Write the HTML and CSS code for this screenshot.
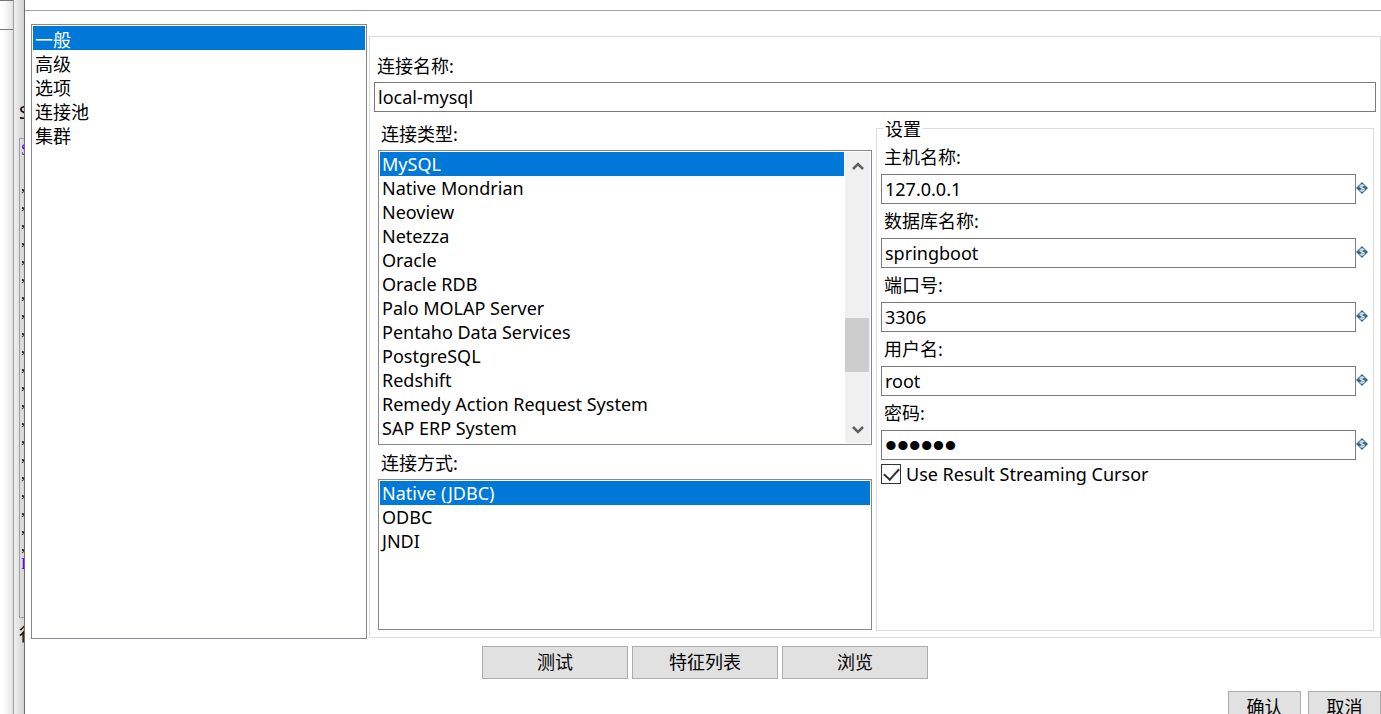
FILE: index.html
```html
<!DOCTYPE html>
<html lang="zh-CN">
<head>
<meta charset="utf-8">
<title>数据库连接</title>
<link rel="stylesheet" href="styles.css">
</head>
<body>
<svg class="defs" aria-hidden="true">
  <symbol id="variable" viewBox="0 0 12 12">
    <path d="M6 0 12 6 6 12 0 6Z" fill="#3e6a8a"/>
    <path d="M8.200 4C7.500 2.700 4 2.700 4 4.500C4 6.200 8.200 5.700 8.200 7.500C8.200 9.300 4.600 9.200 3.800 8M6 2V10" fill="none" stroke="#d3e0ea" stroke-width="1.300"/>
  </symbol>
</svg>
<div class="desktop">
  <div class="app-window"><div class="app-toolbar"></div></div>
  <div class="step-window">
    <div class="step-label">S</div>
    <pre class="sql"><b>S</b>

,
,
,
,
,
,
,
,
,
,
,
,
,
,
,
,
,
,
,
,
,
<b>F</b></pre>
    <div class="step-status">行</div>
  </div>
  <main class="dialog">
    <div class="dialog-top"></div>
    <div class="workspace">
      <select class="listbox nav" size="5" aria-label="分类">
        <option selected>一般</option>
        <option>高级</option>
        <option>选项</option>
        <option>连接池</option>
        <option>集群</option>
      </select>
      <section class="panel">
        <label class="label name-label" for="name">连接名称:</label>
        <input class="text-input" id="name" type="text" value="local-mysql">
        <div class="columns">
          <div class="types">
            <label class="label" for="type">连接类型:</label>
            <div class="scroll-list">
              <select class="listbox" id="type" size="12">
                <option selected>MySQL</option>
                <option>Native Mondrian</option>
                <option>Neoview</option>
                <option>Netezza</option>
                <option>Oracle</option>
                <option>Oracle RDB</option>
                <option>Palo MOLAP Server</option>
                <option>Pentaho Data Services</option>
                <option>PostgreSQL</option>
                <option>Redshift</option>
                <option>Remedy Action Request System</option>
                <option>SAP ERP System</option>
              </select>
              <div class="scrollbar" aria-hidden="true">
                <svg class="arrow" viewBox="0 0 12 10"><path d="M1 8 6 3 11 8" /></svg>
                <div class="track"><div class="thumb"></div></div>
                <svg class="arrow" viewBox="0 0 12 10"><path d="M1 2 6 7 11 2" /></svg>
              </div>
            </div>
            <label class="label" for="access">连接方式:</label>
            <select class="listbox access" id="access" size="3">
              <option selected>Native (JDBC)</option>
              <option>ODBC</option>
              <option>JNDI</option>
            </select>
          </div>
          <fieldset class="settings">
            <legend>设置</legend>
            <label class="field-label" for="host">主机名称:</label>
            <div class="field"><input class="text-input" id="host" type="text" value="127.0.0.1"><svg class="variable"><use href="#variable"/></svg></div>
            <label class="field-label" for="db">数据库名称:</label>
            <div class="field"><input class="text-input" id="db" type="text" value="springboot"><svg class="variable"><use href="#variable"/></svg></div>
            <label class="field-label" for="port">端口号:</label>
            <div class="field"><input class="text-input" id="port" type="text" value="3306"><svg class="variable"><use href="#variable"/></svg></div>
            <label class="field-label" for="user">用户名:</label>
            <div class="field"><input class="text-input" id="user" type="text" value="root"><svg class="variable"><use href="#variable"/></svg></div>
            <label class="field-label" for="password">密码:</label>
            <div class="field"><input class="text-input password" id="password" type="password" value="secret"><svg class="variable"><use href="#variable"/></svg></div>
            <label class="check"><input type="checkbox" checked>Use Result Streaming Cursor</label>
          </fieldset>
        </div>
      </section>
    </div>
    <div class="tools">
      <button class="button wide" type="button">测试</button>
      <button class="button wide" type="button">特征列表</button>
      <button class="button wide" type="button">浏览</button>
    </div>
    <div class="actions">
      <button class="button" type="button">确认</button>
      <button class="button" type="button">取消</button>
    </div>
  </main>
</div>
</body>
</html>
```
FILE: styles.css
```css
* {
  box-sizing: border-box;
}

body {
  margin: 0;
  overflow: hidden;
  background: #fff;
  color: #000;
  font: 18px/24px "Noto Sans", "Noto Sans CJK SC", sans-serif;
}

input, select, button {
  font: inherit;
  color: inherit;
  border-radius: 0;
  margin: 0;
}

.defs {
  display: none;
}

.desktop {
  display: flex;
  height: 100vh;
}

.app-window {
  flex: 0 0 14px;
  border-top: 1px solid #777;
  border-right: 1px solid #a0a0a0;
  background: linear-gradient(to right, #fff, #fafafa 40%, #e2e2e2);
}

.app-toolbar {
  height: 29px;
  border-bottom: 1px solid #777;
}

.step-window {
  flex: 0 0 10px;
  overflow: hidden;
  padding: 100px 0 0 5px;
  background: linear-gradient(to right, #f0f0f0, #d4d4d4);
  white-space: nowrap;
}

.step-label {
  height: 38px;
}

.sql {
  height: 480px;
  margin: 0;
  padding: 2px 0 0 1px;
  border: 1px solid #a0a0a0;
  border-right: 0;
  font: 16px/18px "Liberation Serif", serif;
}

.sql b {
  color: #50f;
  font-weight: normal;
}

.step-status {
  padding-top: 4px;
}

.dialog {
  flex: 1;
  min-width: 0;
  border-left: 1px solid #6e6e6e;
}

.dialog-top {
  height: 11px;
  border-bottom: 1px solid #a0a0a0;
}

.workspace {
  display: grid;
  grid-template-columns: 336px minmax(0, 1fr);
  gap: 2px;
  padding: 13px 0 0 6px;
}

.listbox {
  display: block;
  width: 100%;
  padding: 1px;
  border: 1px solid #828790;
  background: #fff;
  overflow: hidden;
  outline: 0;
}

.listbox option {
  height: 24px;
  min-height: 24px;
  padding: 0 2px;
  line-height: 24px;
}

.listbox option:checked {
  background: linear-gradient(#0078d7, #0078d7);
  -webkit-text-fill-color: #fff;
}

.nav {
  height: 100%;
}

.panel {
  margin: 12px 0 1px;
  padding: 17px 4px 6px;
  border: 1px solid #dcdcdc;
}

.label {
  display: block;
  height: 24px;
  padding-left: 3px;
}

.text-input {
  display: block;
  width: 100%;
  height: 30px;
  padding: 0 3px;
  border: 1px solid #7a7a7a;
  background: #fff;
  outline: 0;
}

.name-label {
  margin-bottom: 4px;
}

.columns {
  display: grid;
  grid-template-columns: minmax(0, 494fr) minmax(0, 498fr);
  gap: 4px;
  padding: 5px 2px 0 4px;
}

.types {
  display: flex;
  flex-direction: column;
  gap: 4px;
  padding: 5px 0 1px;
}

.scroll-list {
  display: flex;
  height: 295px;
  margin-bottom: 2px;
  border: 1px solid #828790;
}

.scroll-list .listbox {
  flex: 1;
  min-width: 0;
  height: 100%;
  padding-right: 0;
  border: 0;
}

.scrollbar {
  display: flex;
  flex: 0 0 25px;
  flex-direction: column;
  align-items: center;
  margin: 1px;
  padding: 9px 0 8px;
  background: #f0f0f0;
}

.arrow {
  width: 12px;
  height: 10px;
  fill: none;
  stroke: #606060;
  stroke-width: 2.500;
}

.track {
  flex: 1;
  width: 100%;
  padding-top: 147px;
}

.thumb {
  width: 24px;
  height: 54px;
  background: #cdcdcd;
}

.access {
  height: 151px;
}

.settings {
  min-width: 0;
  margin: 0;
  padding: 0 5px 0 4px;
  border: 1px solid #dcdcdc;
}

.settings legend {
  height: 23px;
  margin-left: 2px;
  padding: 0 2px;
}

.field-label {
  display: block;
  height: 34px;
  padding: 5px 3px;
}

.field {
  display: flex;
}

.field .text-input {
  flex: 1;
  min-width: 0;
}

.field .password {
  font: 34px/28px "Liberation Sans", sans-serif;
}

.variable {
  width: 12px;
  height: 12px;
  margin-top: 8px;
}

.check {
  display: flex;
  align-items: center;
  gap: 5px;
  padding-top: 2px;
}

.check input {
  appearance: none;
  width: 20px;
  height: 20px;
  border: 1px solid #333;
  display: grid;
  place-items: center;
}

.check input:checked::after {
  content: "";
  width: 7px;
  height: 13px;
  margin-bottom: 4px;
  border: solid #333;
  border-width: 0 2px 2px 0;
  transform: rotate(42deg);
}

.tools {
  display: flex;
  justify-content: center;
  gap: 4px;
  padding: 7px 0 12px 4px;
}

.actions {
  display: flex;
  justify-content: flex-end;
  gap: 7px;
}

.button {
  width: 73px;
  height: 33px;
  padding: 0 0 2px;
  border: 1px solid #adadad;
  background: #e1e1e1;
}

.wide {
  width: 146px;
}
```
